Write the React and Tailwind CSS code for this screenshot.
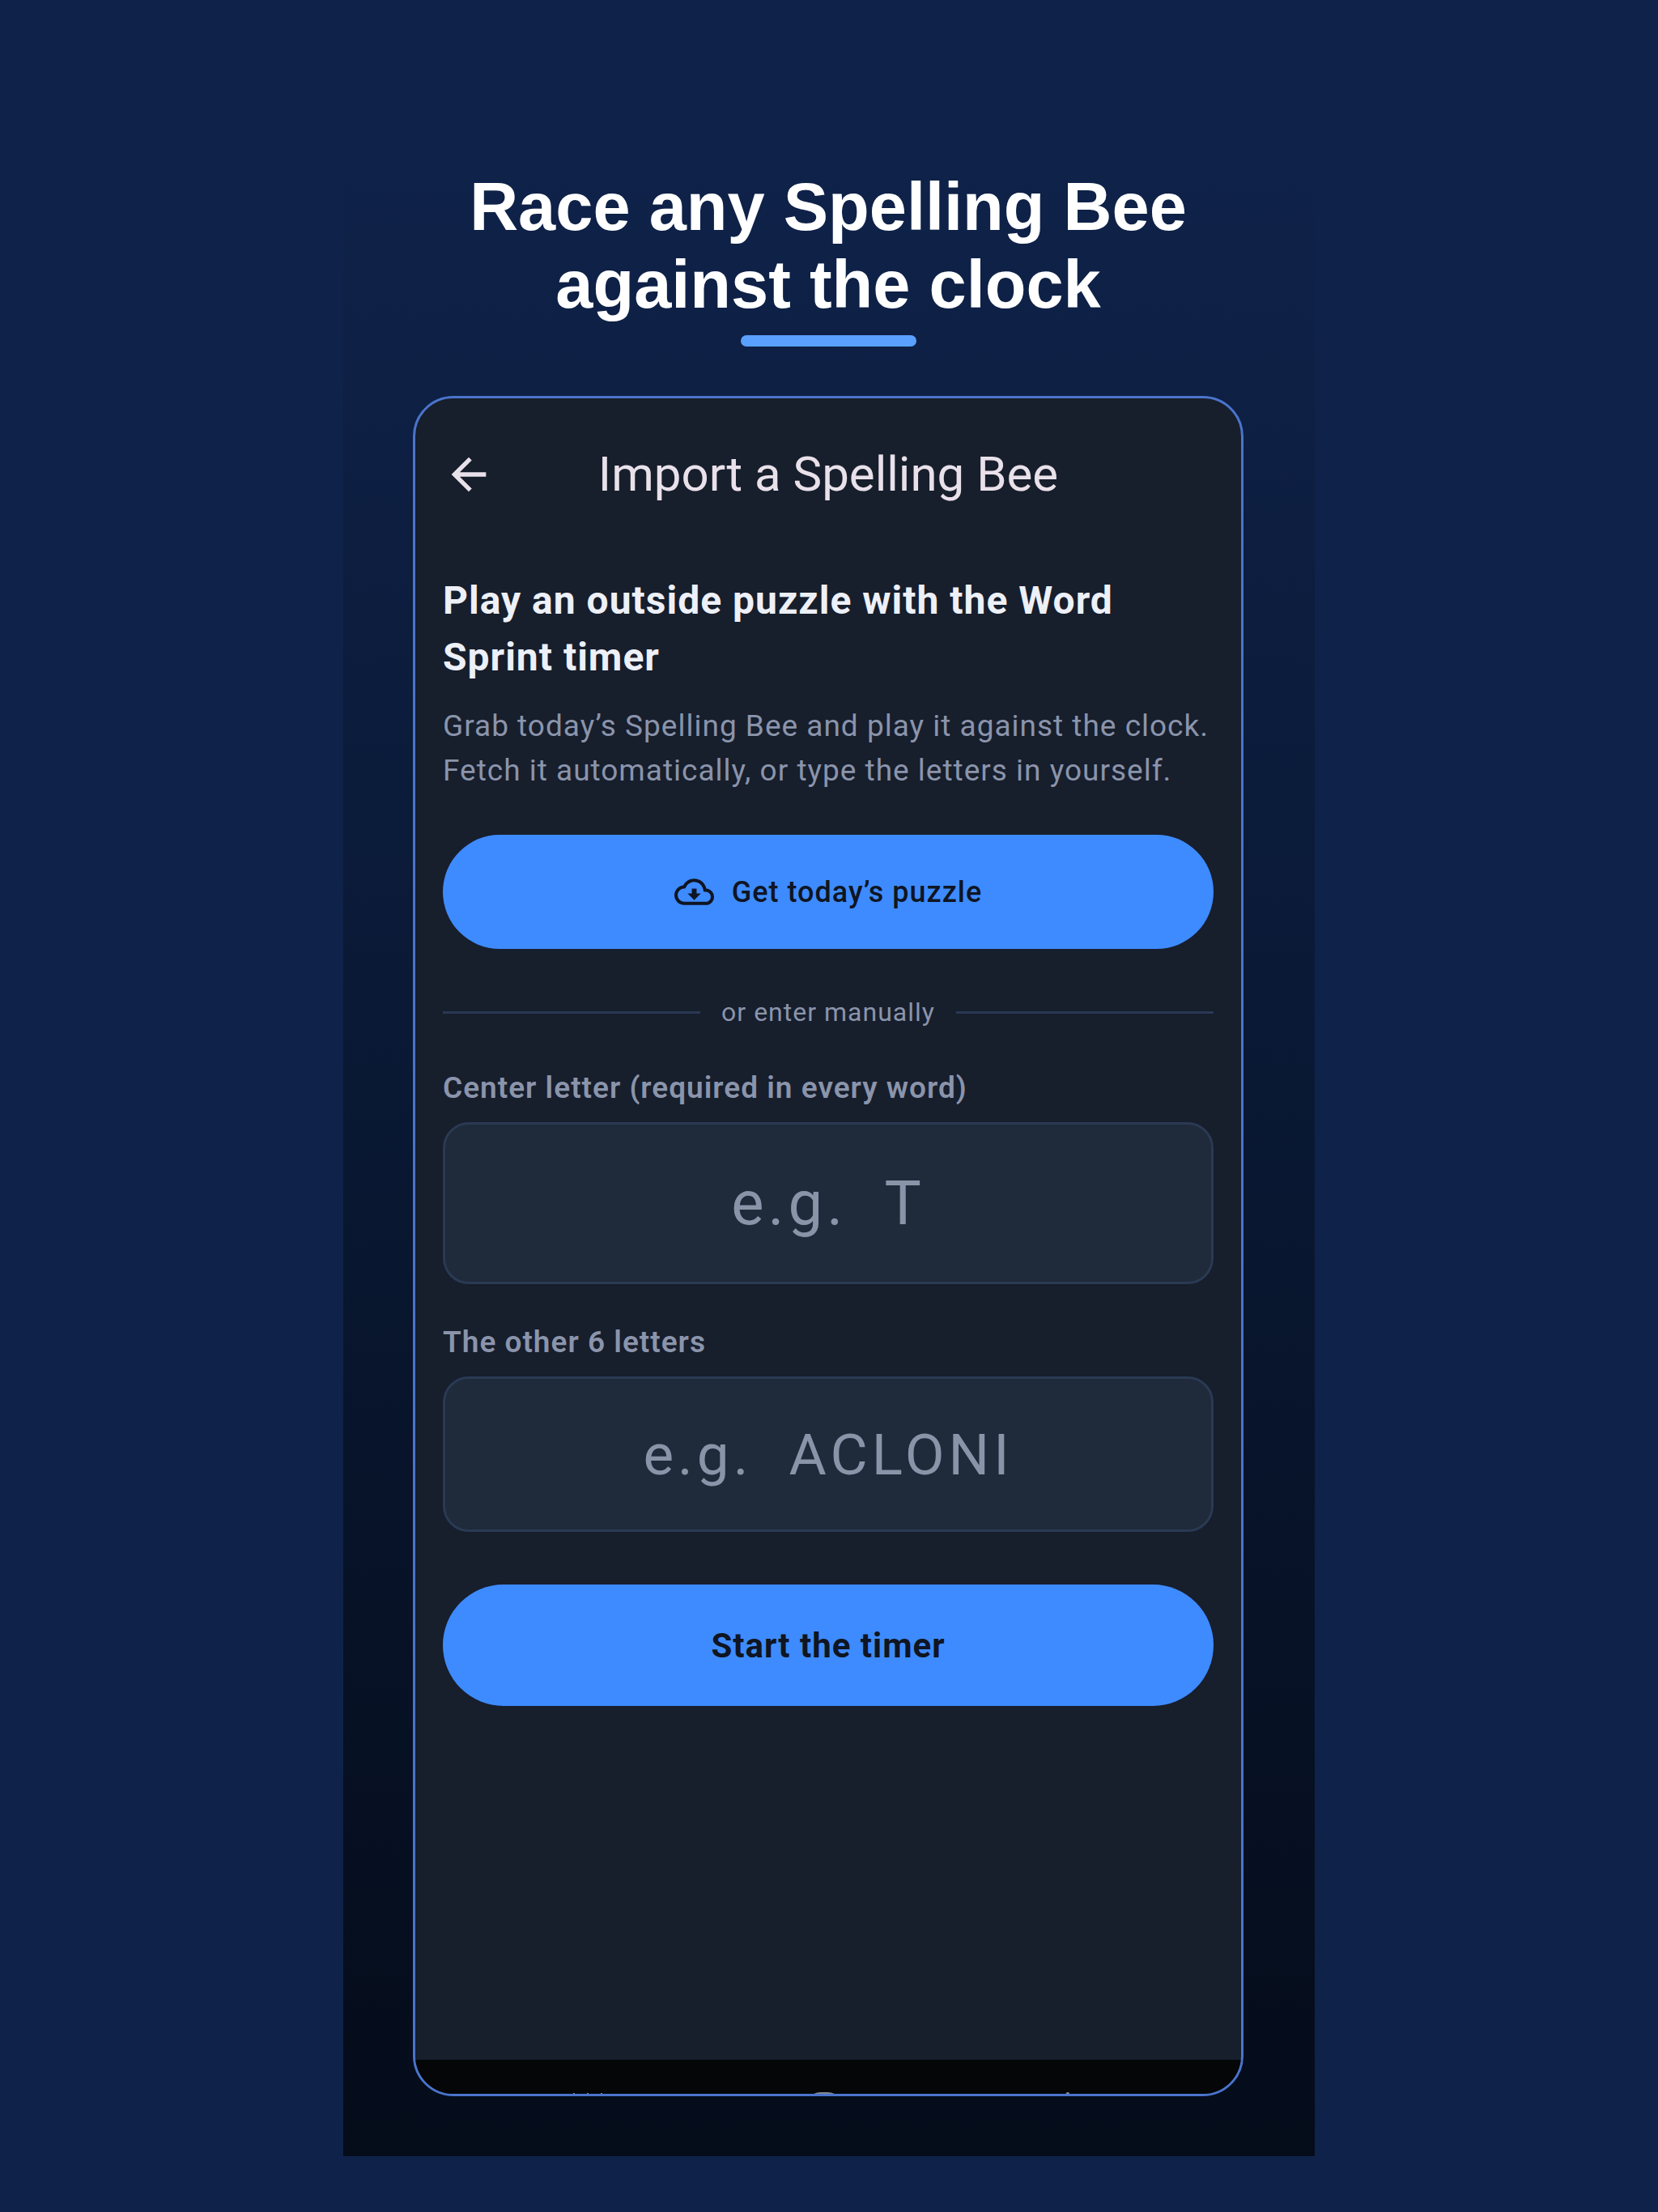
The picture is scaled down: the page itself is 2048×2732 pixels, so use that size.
import React from "react";

function ArrowBack() {
  return (
    <svg viewBox="0 0 24 24" className="size-16" fill="currentColor" aria-hidden="true">
      <path d="M20 11H7.83l5.59-5.59L12 4l-8 8 8 8 1.41-1.41L7.83 13H20v-2z" />
    </svg>
  );
}

function CloudDownload() {
  return (
    <svg viewBox="0 0 24 24" className="size-[49px]" fill="currentColor" aria-hidden="true">
      <path d="M19.35 10.04C18.67 6.59 15.64 4 12 4 9.11 4 6.6 5.64 5.35 8.04 2.34 8.36 0 10.91 0 14c0 3.31 2.69 6 6 6h13c2.76 0 5-2.24 5-5 0-2.64-2.05-4.78-4.65-4.96zM19 18H6c-2.21 0-4-1.79-4-4 0-2.05 1.53-3.76 3.56-3.97l1.07-.11.5-.95C8.08 7.14 9.94 6 12 6c2.62 0 4.88 1.86 5.39 4.43l.3 1.5 1.53.11c1.56.1 2.78 1.41 2.78 2.96 0 1.65-1.35 3-3 3zm-5.55-8h-2.9v3H8l4 4 4-4h-2.55z" />
    </svg>
  );
}

function SystemNav() {
  return (
    <nav
      aria-label="System"
      className="mt-auto flex h-[42px] w-full shrink-0 items-start justify-center gap-[244px] overflow-hidden bg-[#040608] pt-10 pr-[10px] text-[#85878c]"
    >
      <button type="button" aria-label="Recent apps" className="shrink-0">
        <svg viewBox="0 0 48 48" className="size-12" stroke="currentColor" strokeWidth="2" aria-hidden="true">
          <path d="M7 1v46M24 1v46M41 1v46" />
        </svg>
      </button>
      <button type="button" aria-label="Home" className="shrink-0">
        <svg viewBox="0 0 48 48" className="size-12" fill="none" stroke="currentColor" strokeWidth="4" aria-hidden="true">
          <rect x="2" y="2" width="44" height="44" rx="18" />
        </svg>
      </button>
      <button type="button" aria-label="System back" className="shrink-0">
        <svg viewBox="0 0 48 48" className="size-12" fill="none" stroke="currentColor" strokeWidth="4" strokeLinecap="round" aria-hidden="true">
          <path d="M33 2L12 24l21 22" />
        </svg>
      </button>
    </nav>
  );
}

function Field({ id, label, placeholder, className }) {
  return (
    <div className="flex flex-col">
      <label htmlFor={id} className="text-[37px] leading-[44px] font-semibold tracking-[1px] text-[#8a94ab]">
        {label}
      </label>
      <input
        id={id}
        type="text"
        placeholder={placeholder}
        className={
          "mt-5 w-full rounded-[32px] border-[3px] border-[#2a3a54] bg-[#1f2a3a] text-center text-[#edf0f7] outline-none placeholder:text-[#8a94a9] " +
          className
        }
      />
    </div>
  );
}

export default function App() {
  return (
    <div className="flex min-h-screen w-full flex-col items-center bg-[#0f2249] py-[69px] font-['Roboto',sans-serif]">
      <main className="flex w-full max-w-[1200px] flex-1 flex-col items-center bg-linear-to-b/srgb from-[#0f2249] from-5% via-[#091833] to-[#050c1a] pr-[88px] pb-[74px] pl-[86px]">
        <h1 className="mt-[139px] text-center font-['Liberation_Sans',sans-serif] text-[83px] leading-[96px] font-bold text-white">
          Race any Spelling Bee
          <br />
          against the clock
        </h1>
        <div className="mt-[14px] h-[14px] w-[217px] rounded-full bg-[#5aa0ff]" />

        <section className="mt-[61px] flex w-full flex-1 flex-col overflow-hidden rounded-[50px] border-[3px] border-[#4a74cc] bg-[#171e2c]">
          <header className="grid grid-cols-[64px_1fr_64px] items-center px-[34px] pt-[59px]">
            <button type="button" aria-label="Back" className="text-[#e9e1ea]">
              <ArrowBack />
            </button>
            <h2 className="text-center text-[60px] leading-[70px] text-[#e9e1ea]">Import a Spelling Bee</h2>
          </header>

          <div className="flex flex-col px-[34px] pt-[86px]">
            <h3 className="text-[48px] leading-[70px] font-bold tracking-[1px] text-[#edf0f7]">
              Play an outside puzzle with the Word Sprint timer
            </h3>
            <p className="mt-[22px] text-[37px] leading-[55px] tracking-[1px] text-[#8a94ab]">
              Grab today’s Spelling Bee and play it against the clock. Fetch it automatically, or type the letters in
              yourself.
            </p>

            <button
              type="button"
              className="mt-[52px] flex h-[141px] w-full items-center justify-center gap-[22px] rounded-full bg-[#3e8bff] text-[36px] font-medium tracking-[1px] text-[#0f1522]"
            >
              <CloudDownload />
              Get today’s puzzle
            </button>

            <div className="mt-14 flex items-center gap-[26px] text-[32px] leading-[44px] tracking-[1px] text-[#8a94ab]">
              <span className="h-[3px] flex-1 bg-[#2a3854]" />
              or enter manually
              <span className="h-[3px] flex-1 bg-[#2a3854]" />
            </div>

            <div className="mt-[50px] flex flex-col gap-[50px]">
              <Field
                id="center-letter"
                label="Center letter (required in every word)"
                placeholder="e.g.  T"
                className="h-[200px] text-[76px] tracking-[5px]"
              />
              <Field
                id="other-letters"
                label="The other 6 letters"
                placeholder="e.g.  ACLONI"
                className="h-[192px] text-[71px] tracking-[5px]"
              />
            </div>

            <button
              type="button"
              className="mt-[65px] h-[150px] w-full rounded-full bg-[#3e8bff] text-[42px] font-bold tracking-[1px] text-[#0f1522]"
            >
              Start the timer
            </button>
          </div>

          <SystemNav />
        </section>
      </main>
    </div>
  );
}
